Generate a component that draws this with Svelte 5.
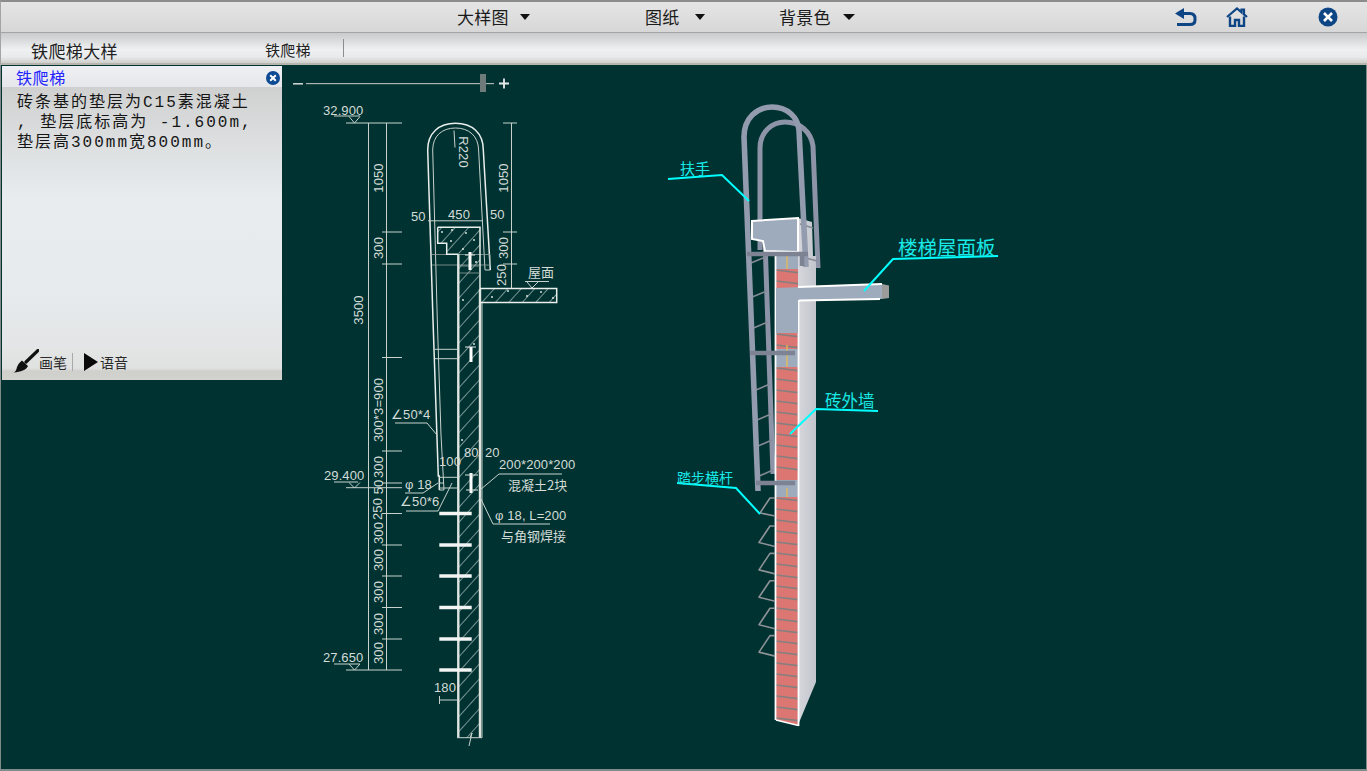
<script>
  const menus = [
    { label: '大样图', w: 188 },
    { label: '图纸', w: 134 },
    { label: '背景色', w: 100 }
  ];

  // CAD dimension ticks on the left column
  const ticks = [232, 264, 357.5, 451, 483, 513.5, 545, 576, 607.5, 639];
  const rungs = [513.5, 545, 576, 607.5, 639, 670];
  const vTexts = [
    [378, 178, '1050'], [378, 248, '300'], [358, 310, '3500'], [378, 410, '300*3=900'],
    [378, 467, '300'], [378, 487, '50'], [377, 509, '250'], [378, 533, '300'],
    [378, 560, '300'], [378, 592, '300'], [378, 624, '300'], [378, 653, '300'],
    [503, 178, '1050'], [503, 248, '300'], [501, 275, '250']
  ];
  const hTexts = [
    [323, 115, '32.900'], [324, 480, '29.400'], [323, 662, '27.650'],
    [411, 221, '50'], [448, 219, '450'], [490, 219, '50'],
    [391, 419, '∠50*4'], [439, 466, '100'], [464, 457, '80'], [485, 457, '20'],
    [499, 469, '200*200*200'], [405, 489, 'φ 18'], [400, 506, '∠50*6'],
    [495, 520, 'φ 18, L=200'], [434, 692, '180']
  ];
  const cnTexts = [
    [528, 277, '屋面'], [508, 490, '混凝土2块'], [501, 541, '与角钢焊接']
  ];

  // 3D wall
  const brickRuns = [[269, 288], [333, 346], [367, 477], [497, 723]];
  const concreteRuns = [[250, 269], [288, 333], [346, 367], [477, 497]];
  const mortar = [];
  for (const [a, b] of brickRuns) {
    for (let y = a + 1; y < b; y += 11) mortar.push(y);
  }
  const steps = [0, 1, 2, 3, 4].map((i) => 526 + i * 27.4);
  const ladder = [260, 294, 325, 387, 417, 443, 473].map((y) => ({
    x1: 744 + ((y - 137) * 14) / 354 + 2,
    y1: y + 3,
    x2: 765 + ((y - 240) * 8) / 234,
    y2: y - 3
  }));
  const dots = [
    [442, 232], [452, 230], [466, 233], [474, 240], [451, 241], [463, 249], [476, 262],
    [492, 297], [508, 291], [527, 296], [541, 292], [553, 298], [463, 300], [474, 344], [462, 440]
  ];
</script>

<div class="app">
  <header class="toolbar">
    <nav class="menus">
      {#each menus as m}
        <div class="menu" style="width:{m.w}px">
          <span>{m.label}</span><i class="caret"></i>
        </div>
      {/each}
    </nav>
    <div class="tools">
      <svg class="tool back" width="24" height="20" viewBox="0 0 24 20">
        <path d="M4 6.5H16C19.5 6.5 21 8.5 21 11.5V13C21 16 19.5 17.5 16 17.5H3" fill="none" stroke="#0d4585" stroke-width="3"/>
        <path d="M1 6.5L10 1V12Z" fill="#0d4585"/>
      </svg>
      <svg class="tool home" width="22" height="20" viewBox="0 0 22 20">
        <path d="M1 10L11 1.5L15.5 5.3V2.5H18V7.4L21 10" fill="none" stroke="#0d4585" stroke-width="2.2"/>
        <path d="M4 9.5V19H9V13H13V19H18V9.5" fill="none" stroke="#0d4585" stroke-width="2.4"/>
      </svg>
      <svg class="tool close" width="20" height="20" viewBox="0 0 20 20">
        <circle cx="10" cy="10" r="9.5" fill="#0d4585"/>
        <path d="M6 6L14 14M14 6L6 14" stroke="#fff" stroke-width="2.6"/>
      </svg>
    </div>
  </header>

  <div class="tabs">
    <span class="tab-title">铁爬梯大样</span>
    <span class="tab-item">铁爬梯</span>
    <i class="tab-div"></i>
  </div>

  <main class="stage">
    <svg class="canvas" viewBox="0 65 1367 706" width="1367" height="706">
      <defs>
        <pattern id="hatch" width="10" height="10" patternUnits="userSpaceOnUse" patternTransform="rotate(42)">
          <line x1="0" y1="0" x2="0" y2="10" stroke="#dbe3df" stroke-width="1.1"/>
        </pattern>
        <clipPath id="frontClip">
          <path d="M776 250H798V725L776 720Z"/>
        </clipPath>
        <linearGradient id="sideFace" x1="0" y1="0" x2="1" y2="0">
          <stop offset="0" stop-color="#d5d7dc"/>
          <stop offset="1" stop-color="#c2c5cd"/>
        </linearGradient>
      </defs>

      <!-- slider -->
      <g class="slider">
        <rect x="293" y="83" width="10" height="1.6" fill="#c9d0cd"/>
        <rect x="306" y="83" width="188" height="1.2" fill="#aab4b1"/>
        <rect x="480" y="74" width="6" height="18" fill="#6f7a7a"/>
        <path d="M499 83.5H509M504 78.5V88.5" stroke="#e6ebe9" stroke-width="1.8"/>
      </g>

      <!-- CAD drawing -->
      <g class="cad">
        <path d="M368.5 123V670M386.5 123V670M511.5 123V289"/>
        <path d="M346 123H402M346 487.7H402M346 670H402"/>
        {#each ticks as y}
          <path d="M382 {y}H402"/>
        {/each}
        <path d="M503 123H517M503 232H517M503 264H517"/>
        <!-- levels -->
        <path d="M334 116H360M349 116.5L354.5 123L360 116.5"/>
        <path d="M334 482H358M349 482.5L354.5 488L360 482.5"/>
        <path d="M334 664H360M349 664L354.5 670L360 664"/>
        <path d="M525 281.5H549M527 282L532 288L538 282"/>
        <!-- rail -->
        <path class="bold" d="M427.7 150C427.7 133 439 123.3 455.5 123.3C472 123.3 483.3 133 483.3 150L490.3 270"/>
        <path d="M432.7 150C432.7 136 442 128 455.5 128C469 128 478.3 136 478.6 150L485 270H490.3"/>
        <path class="bold" d="M427.7 150L433 320L438.3 476H439.3V490"/>
        <path d="M432.7 150L437.3 320L441 435L444 490H439.3"/>
        <path d="M454 130.5L455 147.5"/>
        <path d="M428 220.8H483"/>
        <path class="thin" d="M432 254.5H490M432 265H490M490 254.5V265"/>
        <!-- coping -->
        <path class="hatch nb" d="M437.7 227.3H480V264H458V254.3H446.7V243.3H437.7Z"/>
        <path class="bold" d="M437.7 227.3H480V289M458 254.3H446.7V243.3H437.7V227.3"/>
        <!-- wall -->
        <rect class="hatch nb" x="459" y="264" width="20.5" height="474"/>
        <path class="wall" d="M458.3 254.3V737.7M480 289V737.7"/>
        <path d="M482 302V737.7M457 737.7H482"/>
        <path d="M470 737.7L472 733L469 746"/>
        <path class="thin" d="M459 266H480M459 273H480"/>
        <!-- slab -->
        <rect class="hatch nb" x="481" y="289" width="75" height="13"/>
        <path class="bold" d="M480 288.5H556.7V302.5H480"/>
        <!-- brackets -->
        <path class="thick" d="M470 252V270M471 347V362M471 473V493"/>
        <path class="thin2" d="M465 255H475M465 347H476M465 475H478M466 490H478"/>
        <path d="M435 349.3H458M435 358.7H458M439 477.3H458M439 488H458M439 483H444"/>
        <path d="M395 423H427L437 435M405 493H423L438 483M406 511H438L452 483"/>
        <path d="M499 474H562M499 474L480 490M550 524H493L480 497"/>
        <path d="M439.5 700H458M439.5 696V704"/>
        {#each rungs as y}
          <path class="rung" d="M439.3 {y}H471.7"/>
        {/each}
        {#each dots as [x, y]}
          <circle cx={x} cy={y} r="0.9"/>
        {/each}
      </g>
      <g class="cad-text">
        {#each hTexts as [x, y, t]}<text {x} {y}>{t}</text>{/each}
        {#each vTexts as [x, y, t]}
          <text {x} {y} text-anchor="middle" transform="rotate(-90 {x} {y})" dominant-baseline="central">{t}</text>
        {/each}
        <text x="463" y="152" text-anchor="middle" transform="rotate(90 463 152)" dominant-baseline="central">R220</text>
      </g>
      <g class="cad-cn">
        {#each cnTexts as [x, y, t]}<text {x} {y}>{t}</text>{/each}
      </g>

      <!-- 3D model: back rail -->
      <path class="rail back3d" d="M760 250V148C760 132 772 122 785 122C800 122 811 132 813 146L818 268"/>
      <path class="rail back3d" d="M765 240L773 474"/>

      <!-- wall side faces -->
      <path d="M798 218L812 222L813 256L816 256V682L798 725Z" fill="url(#sideFace)"/>
      <path class="strut" d="M800 224L813 228M806 258L817 261"/>

      <!-- wall front -->
      <g clip-path="url(#frontClip)">
        {#each concreteRuns as [a, b]}
          <rect x="776" y={a} width="22" height={b - a} fill="#9dabbd"/>
        {/each}
        {#each brickRuns as [a, b]}
          <rect x="776" y={a} width="22" height={b - a + 3} fill="#dc7672"/>
        {/each}
        {#each mortar as y}
          <path class="mortar" d="M776 {y}L798 {y + 2.6}"/>
        {/each}
        <path class="yellow" d="M787 247V269M787 345V367M787 488V497"/>
      </g>
      <path class="edge" d="M775.5 252V720M798.5 300V726M776 720L798.5 725.5"/>

      <!-- top coping -->
      <path d="M752 221L798 218V252L765 251L763 241L752 239Z" fill="#9dabbd" stroke="#fff" stroke-width="2"/>

      <!-- slab -->
      <path d="M776 288L882 284V299L798 300V333H776Z" fill="#9dabbd"/>
      <path class="edge" d="M798 287L882 284M799 300.5L880 299"/>
      <path d="M882 284L889 285.5V298L882 299Z" fill="#9b9b9b"/>

      <!-- ladder -->
      {#each ladder as s}
        <line class="strut" x1={s.x1} y1={s.y1} x2={s.x2} y2={s.y2}/>
      {/each}
      <path class="rail" d="M744 137C744 118 757 107 772 107C788 107 798 118 799 130L806 267"/>
      <path class="rail" d="M744 137L758 491"/>
      <path class="brace" d="M747 254H808M750 353H795M756 483H795"/>
      <path class="brace" d="M802 252V266"/>

      {#each steps as y}
        <path class="stepbar" d="M775 {y}H770L759 {y + 16.5}L775 {y + 20.5}"/>
      {/each}
      <path class="stepbar" d="M775 516L760 513L770 498H775"/>

      <!-- callouts -->
      <path class="lead" d="M668 179L722 175L749 201"/>
      <path class="lead" d="M998 256L893 259L864 291"/>
      <path class="lead" d="M878 411L816 409L790 434"/>
      <path class="lead" d="M677 483L736 488L760 514"/>
      <text class="call c1" x="680" y="174">扶手</text>
      <text class="call c2" x="898" y="255">楼梯屋面板</text>
      <text class="call c3" x="825" y="407">砖外墙</text>
      <text class="call c4" x="677" y="483">踏步横杆</text>
    </svg>

    <section class="panel">
      <div class="panel-title">
        <span>铁爬梯</span>
        <svg width="14" height="14" viewBox="0 0 14 14">
          <circle cx="7" cy="7" r="7" fill="#0d4a94"/>
          <path d="M4.2 4.2L9.8 9.8M9.8 4.2L4.2 9.8" stroke="#fff" stroke-width="2"/>
        </svg>
      </div>
      <div class="panel-body">
        <div class="line">砖条基的垫层为C15素混凝土</div>
        <div class="line">, 垫层底标高为 -1.600m,</div>
        <div class="line">垫层高300mm宽800mm。</div>
      </div>
      <div class="panel-foot">
        <svg class="brush" width="26" height="24" viewBox="0 0 26 24">
          <path d="M25 1.5L13 13" stroke="#111" stroke-width="3.2" stroke-linecap="round"/>
          <path d="M9 11.5L15 17C13 21 8 23 0.5 23.5C4 22 3 20 4.5 17C5.5 14.5 7 13 9 11.5Z" fill="#111"/>
        </svg>
        <span class="foot-label">画笔</span>
        <i class="foot-div"></i>
        <svg class="play" width="14" height="18" viewBox="0 0 14 18"><path d="M0 0L14 9L0 18Z" fill="#0a0a0a"/></svg>
        <span class="foot-label">语音</span>
      </div>
    </section>
  </main>
</div>

<style>
  :global(body) {
    margin: 0;
    background: #003231;
    overflow: hidden;
  }
  .app {
    width: 1367px;
    height: 771px;
    display: flex;
    flex-direction: column;
    font-family: "Noto Sans CJK SC", "Liberation Sans", sans-serif;
    overflow: hidden;
  }
  .toolbar {
    height: 33px;
    box-sizing: border-box;
    display: flex;
    align-items: center;
    padding-left: 456px;
    border-top: 2px solid #8c8c8c;
    border-bottom: 1.5px solid #a3a4a3;
    border-left: 1px solid #a3a4a3;
    background: linear-gradient(#e4e5e4, #d6d7d6);
  }
  .menus { display: flex; }
  .menu {
    display: flex;
    align-items: center;
    font-size: 17px;
    letter-spacing: 0.3px;
    color: #1b1b1b;
    line-height: 30px;
    height: 30px;
  }
  .caret {
    width: 0;
    height: 0;
    margin-left: 11px;
    border-left: 5px solid transparent;
    border-right: 5px solid transparent;
    border-top: 6px solid #111;
  }
  .menu:nth-child(2) .caret { margin-left: 15px; }
  .menu:nth-child(3) .caret { margin-left: 12px; border-left-width: 6px; border-right-width: 6px; }
  .tools {
    display: flex;
    align-items: center;
    margin-left: auto;
    padding-right: 29px;
  }
  .tool { display: block; }
  .home { margin-left: 28px; }
  .close { margin-left: 70px; }
  .tabs {
    height: 32px;
    box-sizing: border-box;
    display: flex;
    align-items: center;
    padding-left: 30px;
    border-left: 1px solid #a3a4a3;
    border-bottom: 2px solid #b6b6ae;
    background: linear-gradient(#c9cacb 0, #dadbdc 25%, #eef0f2 55%, #e8eaeb 80%, #cfcfcb 100%);
    color: #222;
  }
  .tab-title { font-size: 17px; letter-spacing: 0.4px; width: 234px; line-height: 26px; padding-top: 6px; }
  .tab-item { font-size: 15px; letter-spacing: 0.3px; width: 78px; line-height: 26px; padding-top: 4px; }
  .tab-div { width: 1px; height: 18px; background: #8d8d8d; }
  .stage {
    position: relative;
    flex: 1;
    background: #003231;
    box-shadow: inset 1px 0 #7f8c89, inset -1px 0 #7f8c89, inset 0 -2px #7f8c89;
  }
  .canvas { position: absolute; inset: 0; display: block; }
  .cad path, .cad rect { fill: none; stroke: #c8d2cd; stroke-width: 1; }
  .cad circle { fill: #eef3f0; }
  .cad path.bold { stroke: #e9efec; stroke-width: 1.5; }
  .cad path.wall { stroke: #dfe6e2; stroke-width: 2.4; }
  .cad path.thin { stroke: #90a09c; stroke-width: 0.8; }
  .cad path.thin2 { stroke: #dfe6e2; stroke-width: 1.2; }
  .cad path.thick { stroke: #fff; stroke-width: 3; }
  .cad path.rung { stroke: #f2f5f3; stroke-width: 3.4; }
  .cad .hatch { fill: url(#hatch); }
  .cad .nb { stroke: none; }
  .cad-text text {
    font-family: "Liberation Sans", sans-serif;
    font-size: 13px;
    letter-spacing: 0.1px;
    fill: #d3dcd7;
  }
  .cad-cn text {
    font-family: "Noto Sans CJK SC", sans-serif;
    font-size: 13px;
    fill: #d3dcd7;
  }
  .rail { fill: none; stroke: #939bae; stroke-width: 5.6; }
  .back3d { stroke: #8d94a8; stroke-width: 5; }
  .brace { fill: none; stroke: #7d8393; stroke-width: 4.5; }
  .strut { fill: none; stroke: #858b95; stroke-width: 1.6; }
  .stepbar { fill: none; stroke: #8f9398; stroke-width: 1.6; stroke-linejoin: round; }
  .mortar { stroke: #85807f; stroke-width: 1.7; fill: none; }
  .yellow { stroke: #e6bb55; stroke-width: 1.3; fill: none; }
  .edge { stroke: #fff; stroke-width: 1.8; fill: none; }
  .lead { fill: none; stroke: #0ff; stroke-width: 2; }
  .call {
    font-family: "Noto Sans CJK SC", sans-serif;
    fill: #19e9e6;
  }
  .c1 { font-size: 15px; }
  .c2 { font-size: 19.5px; }
  .c3 { font-size: 16.5px; }
  .c4 { font-size: 14px; }
  .panel {
    position: relative;
    box-sizing: border-box;
    width: 280px;
    height: 314px;
    margin-left: 2px;
    margin-top: 1px;
    display: flex;
    flex-direction: column;
    background: linear-gradient(#c8c9c7 0, #d4d5d5 12%, #e8ecef 42%, #e8ebee 70%, #e0e2e2 100%);
  }
  .panel-title {
    height: 21px;
    display: flex;
    align-items: center;
    justify-content: space-between;
    padding: 0 2px 0 14px;
    background: linear-gradient(#eef0f4, #e5e7eb);
    color: #2323ff;
    font-size: 16px;
    letter-spacing: 0.6px;
  }
  .panel-title svg { margin-top: 3px; }
  .panel-body {
    flex: 1;
    padding: 6px 0 0 15px;
    font-family: "Liberation Mono", "Noto Sans CJK SC", monospace;
    font-size: 16px;
    letter-spacing: 2px;
    line-height: 20px;
    color: #151515;
  }
  .line { white-space: pre; height: 20px; }
  .panel-foot {
    height: 31px;
    display: flex;
    align-items: flex-start;
    padding-left: 11px;
    background: linear-gradient(#e3e5e5 0, #e0e1e1 62%, #cfcfcb 72%, #d2d2ce 100%);
    color: #2a2a2a;
  }
  .foot-label { font-size: 14px; line-height: 20px; margin-top: 3px; }
  .foot-div { width: 1px; height: 18px; background: #a9a9a9; margin: 4px 11px 0 5px; }
  .play { margin: 4px 2px 0 0; }
</style>
